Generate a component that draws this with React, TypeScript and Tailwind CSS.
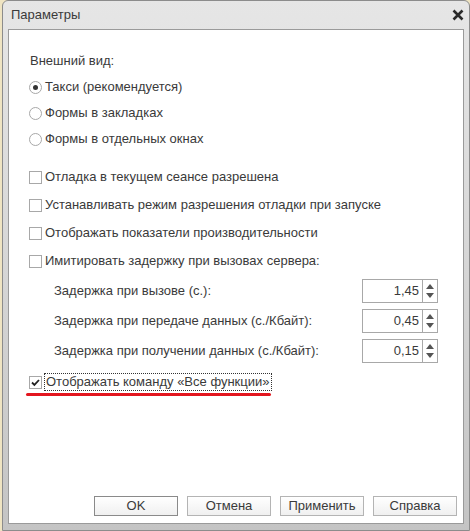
import React from "react";

const font = { fontFamily: '"Liberation Sans", Arial, sans-serif' };

function Radio({ checked, label }: { checked?: boolean; label: string }) {
  return (
    <div className="flex h-[26px] items-center">
      <div className="ml-[20px] flex h-[13px] w-[13px] items-center justify-center rounded-full border border-[#a8a8a8] bg-white">
        {checked && <div className="h-[5px] w-[5px] rounded-full bg-[#333]" />}
      </div>
      <span className="ml-[3px]">{label}</span>
    </div>
  );
}

function Check({ checked, label, focus }: { checked?: boolean; label: string; focus?: boolean }) {
  return (
    <div className="flex h-[28px] items-center">
      <div className="ml-[20px] flex h-[13px] w-[13px] items-center justify-center border border-[#a8a8a8] bg-white">
        {checked && (
          <svg width="11" height="11" viewBox="0 0 11 11">
            <path d="M2 5.5 L4.4 7.9 L9 3" fill="none" stroke="#222" strokeWidth="1.8" />
          </svg>
        )}
      </div>
      <span
        className={
          focus
            ? "ml-[2px] border border-dotted border-[#333] px-[1px] leading-[16px]"
            : "ml-[3px]"
        }
      >
        {label}
      </span>
    </div>
  );
}

function Spin({ label, value }: { label: string; value: string }) {
  return (
    <div className="flex h-[30px] items-center">
      <span className="ml-[45px] flex-1">{label}</span>
      <div className="mr-[25px] flex h-[24px] w-[76px] border border-[#a8a8a8] bg-white">
        <div className="flex flex-1 items-center justify-end pr-[3px]">{value}</div>
        <div className="flex w-[15px] flex-col items-center justify-center gap-[4px] border-l border-[#a8a8a8]">
          <svg width="8" height="5" viewBox="0 0 8 5">
            <path d="M0 5 L4 0 L8 5 Z" fill="#555" />
          </svg>
          <svg width="8" height="5" viewBox="0 0 8 5">
            <path d="M0 0 L8 0 L4 5 Z" fill="#555" />
          </svg>
        </div>
      </div>
    </div>
  );
}

function Btn({ label, def }: { label: string; def?: boolean }) {
  return (
    <div
      className={
        "flex h-[20px] w-[84px] items-center justify-center bg-gradient-to-b from-white to-[#f0f0f0] text-[#3a3a3a] " +
        (def ? "border border-[#8a8a8a]" : "border border-[#b4b4b4]")
      }
    >
      {label}
    </div>
  );
}

export default function App() {
  return (
    <div
      className="relative h-[531px] w-[470px] overflow-hidden bg-[#efe4c2] text-[13px] text-[#3a3a3a]"
      style={font}
    >
      <div className="absolute left-[2px] top-0 flex h-[531px] w-[468px] flex-col rounded-t-[6px] border border-[#8c8c8c] bg-gradient-to-b from-[#e6e6e6] via-[#d6d6d6] to-[#c4c4c4]">
        <div className="flex h-[28px] items-center justify-between pl-[8px] pr-[5px]">
          <span className="text-[#3a3a3a]">Параметры</span>
          <svg width="12" height="12" viewBox="0 0 12 12">
            <path d="M1.5 1.5 L10.5 10.5 M10.5 1.5 L1.5 10.5" stroke="#2a2a2a" strokeWidth="2.6" />
          </svg>
        </div>
        <div className="mx-[5px] mb-[6px] flex flex-1 flex-col border border-[#9a9a9a] bg-white">
          <div className="h-[18px]" />
          <div className="flex h-[26px] items-center pl-[21px]">Внешний вид:</div>
          <Radio checked label="Такси (рекомендуется)" />
          <Radio label="Формы в закладках" />
          <Radio label="Формы в отдельных окнах" />
          <div className="h-[11px]" />
          <Check label="Отладка в текущем сеансе разрешена" />
          <Check label="Устанавливать режим разрешения отладки при запуске" />
          <Check label="Отображать показатели производительности" />
          <Check label="Имитировать задержку при вызовах сервера:" />
          <div className="h-[1px]" />
          <Spin label="Задержка при вызове (с.):" value="1,45" />
          <Spin label="Задержка при передаче данных (с./Кбайт):" value="0,45" />
          <Spin label="Задержка при получении данных (с./Кбайт):" value="0,15" />
          <div className="h-[5px]" />
          <div className="[&>div]:h-[22px]">
            <Check checked focus label="Отображать команду «Все функции»" />
          </div>
          <div className="ml-[17px] h-[3px] w-[245px] rounded-full bg-[#e3161f]" />
          <div className="flex-1" />
          <div className="mb-[7px] flex justify-end gap-[9px] pr-[6px]">
            <Btn def label="OK" />
            <Btn label="Отмена" />
            <Btn label="Применить" />
            <Btn label="Справка" />
          </div>
        </div>
      </div>
    </div>
  );
}
